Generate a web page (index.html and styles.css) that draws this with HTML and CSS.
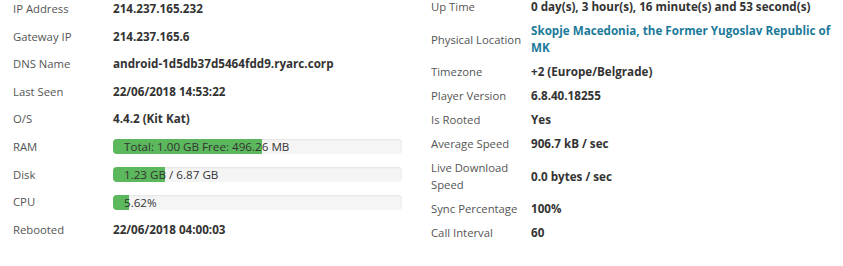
FILE: index.html
```html
<!DOCTYPE html>
<html>
<head>
<meta charset="utf-8">
<link rel="stylesheet" href="styles.css">
</head>
<body>
<div class="page">
  <div class="col col-left">
    <div class="row"><div class="label">IP Address</div><div class="value">214.237.165.232</div></div>
    <div class="row"><div class="label">Gateway IP</div><div class="value">214.237.165.6</div></div>
    <div class="row"><div class="label">DNS Name</div><div class="value">android-1d5db37d5464fdd9.ryarc.corp</div></div>
    <div class="row"><div class="label">Last Seen</div><div class="value">22/06/2018 14:53:22</div></div>
    <div class="row"><div class="label">O/S</div><div class="value">4.4.2 (Kit Kat)</div></div>
    <div class="row"><div class="label">RAM</div><div class="value"><div class="progress"><div class="bar" style="width:51.5%"></div><span class="bar-text">Total: 1.00 GB Free: 496.26 MB</span></div></div></div>
    <div class="row"><div class="label">Disk</div><div class="value"><div class="progress"><div class="bar" style="width:17.9%"></div><span class="bar-text">1.23 GB / 6.87 GB</span></div></div></div>
    <div class="row"><div class="label">CPU</div><div class="value"><div class="progress"><div class="bar" style="width:5.62%"></div><span class="bar-text">5.62%</span></div></div></div>
    <div class="row"><div class="label">Rebooted</div><div class="value">22/06/2018 04:00:03</div></div>
  </div>
  <div class="col col-right">
    <div class="row"><div class="label">Up Time</div><div class="value">0 day(s), 3 hour(s), 16 minute(s) and 53 second(s)</div></div>
    <div class="row"><div class="label">Physical Location</div><div class="value"><a class="link" href="#">Skopje Macedonia, the Former Yugoslav Republic of MK</a></div></div>
    <div class="row"><div class="label">Timezone</div><div class="value">+2 (Europe/Belgrade)</div></div>
    <div class="row"><div class="label">Player Version</div><div class="value">6.8.40.18255</div></div>
    <div class="row"><div class="label">Is Rooted</div><div class="value">Yes</div></div>
    <div class="row"><div class="label">Average Speed</div><div class="value">906.7 kB / sec</div></div>
    <div class="row"><div class="label">Live Download Speed</div><div class="value">0.0 bytes / sec</div></div>
    <div class="row"><div class="label">Sync Percentage</div><div class="value">100%</div></div>
    <div class="row"><div class="label">Call Interval</div><div class="value">60</div></div>
  </div>
</div>
</body>
</html>
```
FILE: styles.css
```css
html, body {
  margin: 0;
  padding: 0;
  background: #fff;
}
body {
  font-family: "Open Sans", "Noto Sans", sans-serif;
  font-size: 12px;
  color: #333;
}
.page {
  display: flex;
  width: 843px;
}
.col-left {
  width: 402px;
  padding-left: 13px;
  box-sizing: border-box;
  margin-right: 17px;
}
.col-right {
  width: 413px;
  padding-left: 12px;
  box-sizing: border-box;
  margin-top: -2px;
}
.row {
  display: flex;
  align-items: center;
}
.col-left .row {
  height: 18px;
  margin-bottom: 9.6px;
  line-height: 18px;
}
.col-right .row {
  line-height: 17px;
  margin-bottom: 7px;
}
.label {
  width: 100px;
  flex: none;
  color: #555;
  font-size: 11.3px;
}
.value {
  flex: 1;
  font-weight: bold;
  color: #333;
  font-size: 11.65px;
}
.link {
  color: #1b7a9a;
  text-decoration: none;
}
.progress {
  position: relative;
  height: 15px;
  background: #f5f5f5;
  border-radius: 4px;
  box-shadow: inset 0 1px 2px rgba(0,0,0,0.08);
  overflow: hidden;
}
.bar {
  height: 100%;
  background: #5cb85c;
}
.bar-text {
  position: absolute;
  left: 11px;
  top: 0;
  line-height: 15px;
  font-weight: normal;
  font-size: 11.65px;
  color: #333;
  white-space: nowrap;
}
```
